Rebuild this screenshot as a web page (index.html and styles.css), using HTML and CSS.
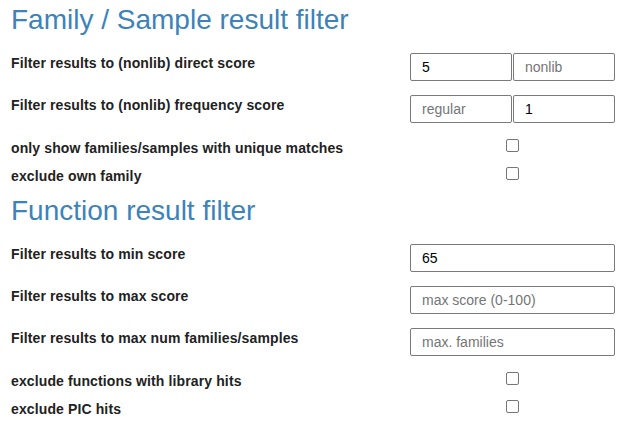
FILE: index.html
```html
<!DOCTYPE html>
<html>
<head>
<meta charset="utf-8">
<link rel="stylesheet" href="styles.css">
</head>
<body>
<div class="page">
  <h2 class="section-title first">Family / Sample result filter</h2>
  <div class="form-row">
    <label class="row-label">Filter results to (nonlib) direct score</label>
    <div class="controls split">
      <input class="field" type="text" value="5">
      <input class="field" type="text" placeholder="nonlib">
    </div>
  </div>
  <div class="form-row">
    <label class="row-label">Filter results to (nonlib) frequency score</label>
    <div class="controls split">
      <input class="field" type="text" placeholder="regular">
      <input class="field" type="text" value="1">
    </div>
  </div>
  <div class="check-row">
    <label class="row-label">only show families/samples with unique matches</label>
    <div class="controls center"><span class="box"></span></div>
  </div>
  <div class="check-row">
    <label class="row-label">exclude own family</label>
    <div class="controls center"><span class="box"></span></div>
  </div>

  <h2 class="section-title second">Function result filter</h2>
  <div class="form-row">
    <label class="row-label">Filter results to min score</label>
    <div class="controls">
      <input class="field wide" type="text" value="65">
    </div>
  </div>
  <div class="form-row">
    <label class="row-label">Filter results to max score</label>
    <div class="controls">
      <input class="field wide" type="text" placeholder="max score (0-100)">
    </div>
  </div>
  <div class="form-row">
    <label class="row-label">Filter results to max num families/samples</label>
    <div class="controls">
      <input class="field wide" type="text" placeholder="max. families">
    </div>
  </div>
  <div class="check-row">
    <label class="row-label">exclude functions with library hits</label>
    <div class="controls center"><span class="box"></span></div>
  </div>
  <div class="check-row">
    <label class="row-label">exclude PIC hits</label>
    <div class="controls center"><span class="box"></span></div>
  </div>
</div>
</body>
</html>
```

FILE: styles.css
```css
html, body {
  margin: 0;
  padding: 0;
  background: #ffffff;
}

.page {
  padding-left: 11px;
  font-family: "Liberation Sans", Arial, sans-serif;
  color: #222222;
}

.section-title {
  margin: 0;
  font-size: 28px;
  font-weight: normal;
  line-height: 32px;
  color: #3b83ba;
}

.section-title.first {
  padding-top: 4px;
  margin-bottom: 17px;
}

.section-title.second {
  margin-top: 2px;
  margin-bottom: 17px;
}

.form-row {
  display: flex;
  height: 28px;
  margin-bottom: 14px;
}

.check-row {
  display: flex;
  height: 28px;
}

.row-label {
  width: 399px;
  font-size: 14px;
  font-weight: bold;
  line-height: 18px;
  letter-spacing: 0.12px;
  padding-top: 1px;
}

.check-row .row-label {
  padding-top: 1.5px;
}

.controls {
  width: 205px;
  display: flex;
}

.controls.split {
  gap: 1px;
}

.controls.center {
  justify-content: center;
}

.field {
  box-sizing: border-box;
  width: 102px;
  height: 28px;
  margin: 0;
  border: 1px solid #7a7a7a;
  border-radius: 2px;
  padding: 0 0 0 11px;
  font-family: "Liberation Sans", Arial, sans-serif;
  font-size: 14px;
  color: #000000;
  background: #ffffff;
}

.field.wide {
  width: 205px;
}

.field::placeholder {
  color: #757575;
}

.box {
  box-sizing: border-box;
  width: 13px;
  height: 13px;
  margin-top: 1.5px;
  border: 1px solid #767676;
  border-radius: 2px;
  background: #ffffff;
}
```
